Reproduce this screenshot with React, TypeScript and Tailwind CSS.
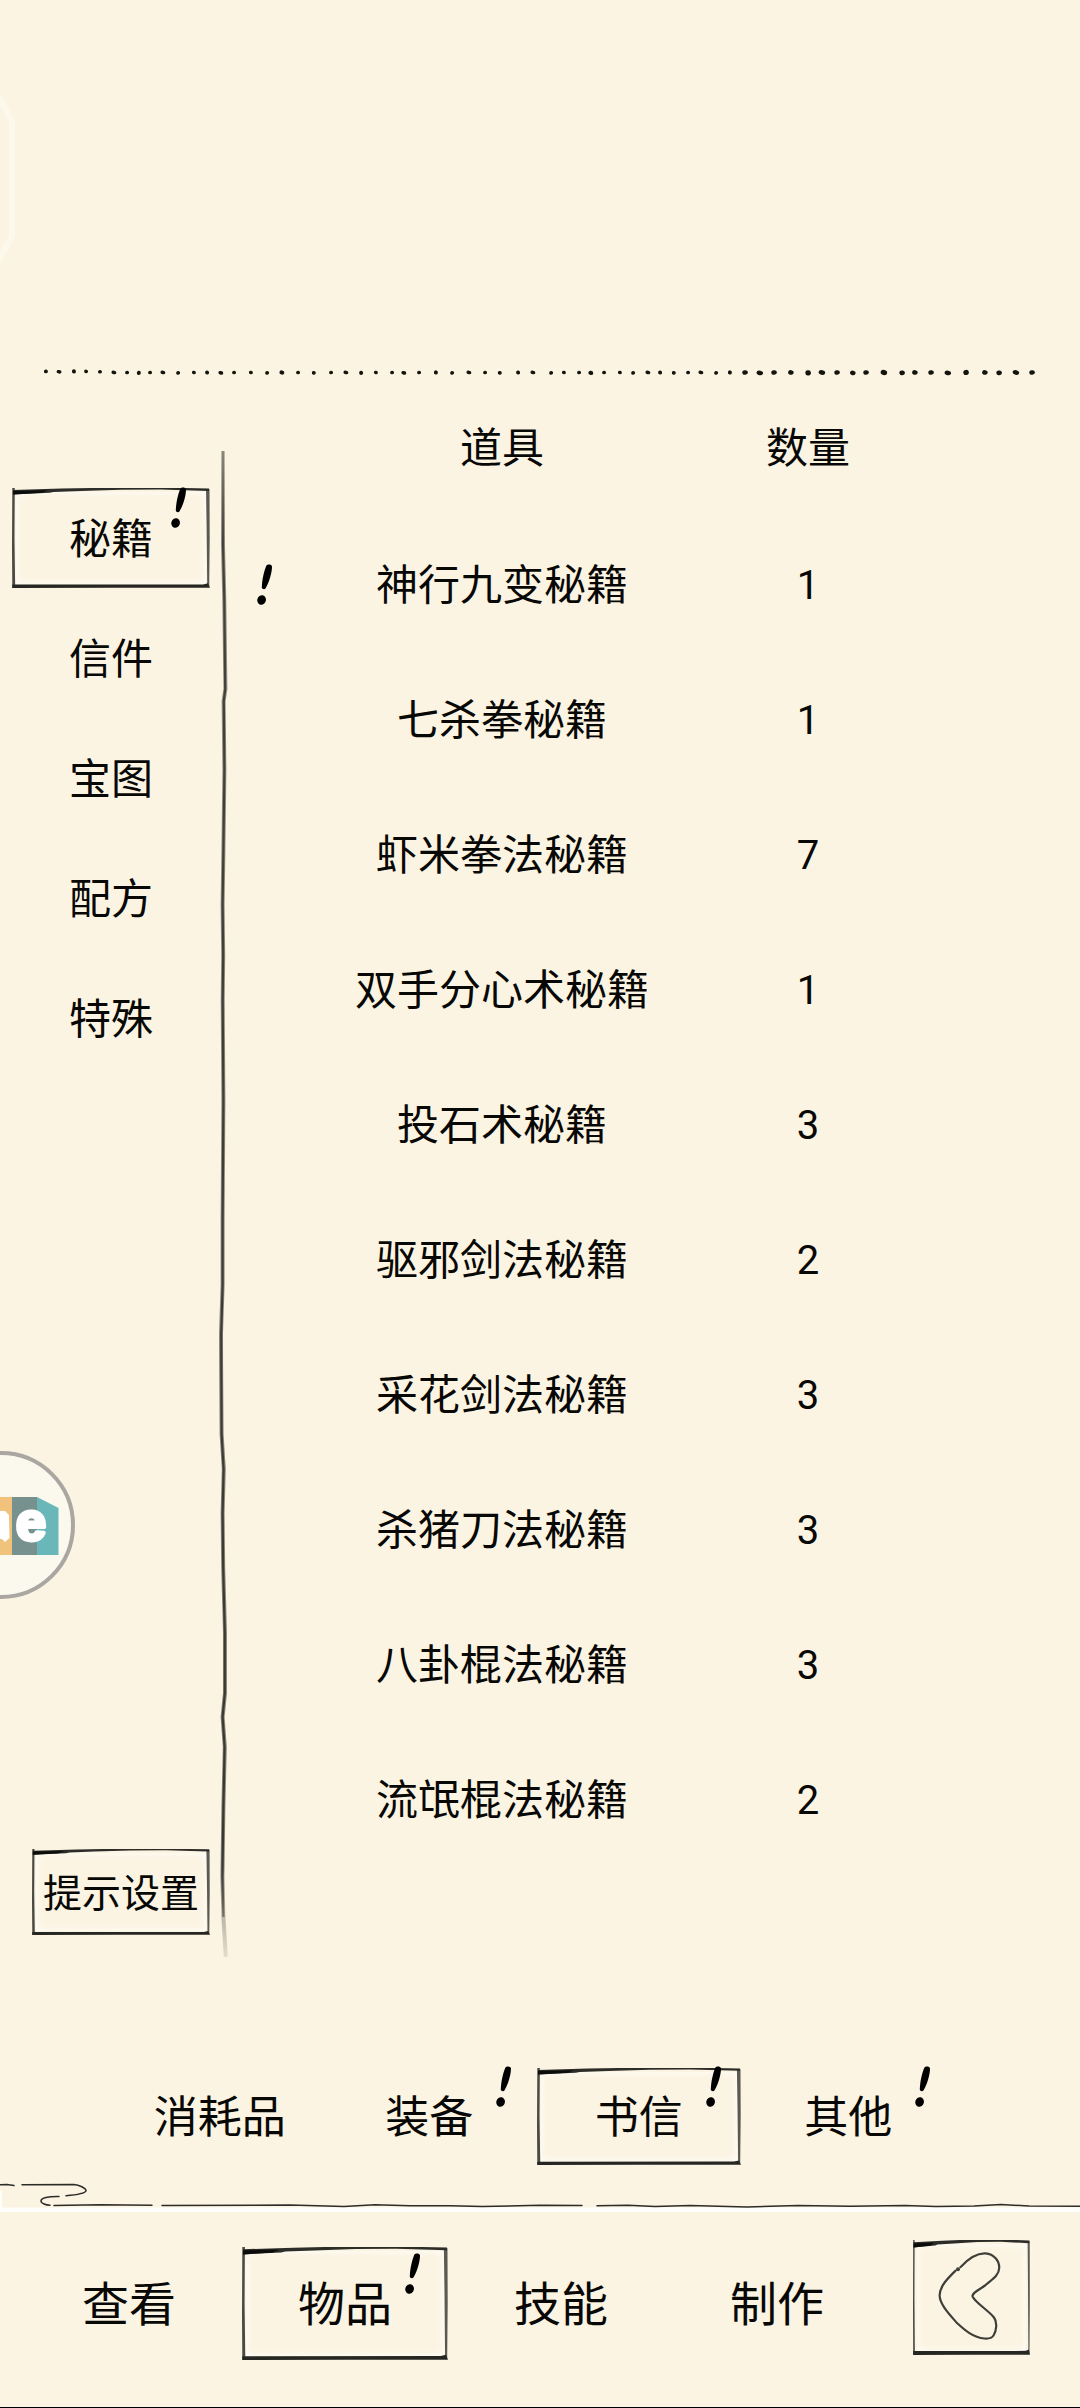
import React, { useState } from 'react';

interface TabItem {
  id: string;
  label: string;
  alert?: boolean;
}

interface BagItem {
  name: string;
  count: number;
  isNew?: boolean;
}

const categories: TabItem[] = [
  { id: 'manual', label: '秘籍', alert: true },
  { id: 'letter', label: '信件' },
  { id: 'map', label: '宝图' },
  { id: 'recipe', label: '配方' },
  { id: 'special', label: '特殊' },
];

const bagTabs: TabItem[] = [
  { id: 'consumable', label: '消耗品' },
  { id: 'equipment', label: '装备', alert: true },
  { id: 'books', label: '书信', alert: true },
  { id: 'other', label: '其他', alert: true },
];

const navTabs: TabItem[] = [
  { id: 'view', label: '查看' },
  { id: 'items', label: '物品', alert: true },
  { id: 'skills', label: '技能' },
  { id: 'craft', label: '制作' },
];

const items: BagItem[] = [
  { name: '神行九变秘籍', count: 1, isNew: true },
  { name: '七杀拳秘籍', count: 1 },
  { name: '虾米拳法秘籍', count: 7 },
  { name: '双手分心术秘籍', count: 1 },
  { name: '投石术秘籍', count: 3 },
  { name: '驱邪剑法秘籍', count: 2 },
  { name: '采花剑法秘籍', count: 3 },
  { name: '杀猪刀法秘籍', count: 3 },
  { name: '八卦棍法秘籍', count: 3 },
  { name: '流氓棍法秘籍', count: 2 },
];

const dots = [
  46, 59, 74, 86, 100, 114, 127, 139, 150, 163, 178, 194, 207, 221, 234, 251, 267, 282, 298, 314, 331, 346,
  361, 376, 392, 404, 419, 436, 452, 469, 485, 500, 518, 533, 551, 564, 579, 591, 604, 620, 633, 648, 660,
  674, 688, 701, 716, 730, 745, 760, 774, 791, 808, 822, 837, 853, 866, 884, 902, 915, 931, 948, 966, 985,
  999, 1016, 1032,
];

const DottedLine = () => (
  <svg viewBox="0 0 1080 20" className="block w-full" fill="#14140f" aria-hidden="true">
    {dots.map((x, i) => (
      <ellipse
        key={x}
        cx={x}
        cy={(i < 5 ? 11.4 : 12.5) + (i % 3 === 1 ? 0.4 : 0)}
        rx={(i > 47 ? 2.8 : 2) + (i % 4 === 1 ? 0.5 : 0)}
        ry={(i > 47 ? 2.3 : 1.8) + (i % 5 === 2 ? 0.3 : 0)}
        transform={`rotate(${i % 2 ? 12 : -8} ${x} 12)`}
      />
    ))}
  </svg>
);

const InkFrame = () => (
  <span className="pointer-events-none absolute inset-0" aria-hidden="true">
    <span className="absolute inset-1 shadow-[inset_0_0_8px_#ffffff]" />
    <svg viewBox="0 0 200 100" preserveAspectRatio="none" className="absolute inset-0 h-full w-full">
      <path d="M0.3 0 L2.8 0 L2.5 50 L3.2 100 L0.3 100 L0 60 Z" fill="#4a4a44" />
      <path d="M196 2 L199.5 1 L199.7 50 L199.2 99 L197.2 99 L196.6 40 Z" fill="#5a5a53" />
      <path d="M1 2 L50 0.6 L110 -0.6 L150 -0.4 L199 0.4 L199 2.9 L150 1.5 L110 1.8 L70 3 L42 4 L38 4.8 L1 6.6 Z" fill="#2c2c28" />
      <path d="M1 3 L36 2.2 L30 4.8 L1 6.6 Z" fill="#0c0c0a" />
      <path d="M0.3 96.6 L193 96.4 L198 95.3 L200 99.8 L100 99.8 L0.3 100 Z" fill="#262622" />
    </svg>
  </span>
);

const AlertMark: React.FC<{ className?: string }> = ({ className = '' }) => (
  <svg viewBox="0 0 15 41" className={`h-[41px] w-[15px] ${className}`} fill="#000000" aria-hidden="true">
    <path d="M9.4 1.6 C10.4 -0.2 14.6 0 15 2.4 C15 8 12.6 17 8.6 24.2 C7.6 25.8 5 25.2 4.8 23.4 C5 16 7 7 9.4 1.6 Z" />
    <ellipse cx="4.6" cy="36" rx="4.3" ry="4.8" transform="rotate(15 4.6 36)" />
  </svg>
);

const InkDivider = () => (
  <svg viewBox="0 0 12 1507" className="mt-[71px] block w-3 shrink-0 self-start" fill="none" aria-hidden="true">
    <defs>
      <linearGradient id="ink" gradientUnits="userSpaceOnUse" x1="0" y1="0" x2="0" y2="1507">
        <stop offset="0" stopColor="#2a2a25" stopOpacity="0.45" />
        <stop offset="0.06" stopColor="#2a2a25" stopOpacity="0.9" />
        <stop offset="0.94" stopColor="#2a2a25" stopOpacity="1" />
        <stop offset="1" stopColor="#2a2a25" stopOpacity="0.2" />
      </linearGradient>
    </defs>
    <g stroke="url(#ink)" strokeLinejoin="round">
      <path
        d="M5 0 L5 94 L6.3 149 L7.4 238 L5.6 250 L6.4 319 L5.4 399 L4.6 454 L5.2 504 L4.7 549 L5.4 649 L4.6 769 L4.6 834 L3 883 L3.1 913 L3.6 983 L5.8 1018 L4.6 1062 L5.2 1117 L7 1182 L7 1242 L4.6 1266 L6.8 1296 L5.4 1356 L4.4 1426 L5.4 1466 L7.8 1506"
        strokeOpacity="0.55"
        strokeWidth="4"
      />
      <path
        d="M5 0 L5 94 L6.3 149 L7.2 238 L5.8 250 L6.4 319 L5.4 399 L4.6 454 L5.2 504 L4.7 549 L5.4 649 L4.6 769 L4.6 834 L3.2 883 L3.3 913 L3.6 983 L5.6 1018 L4.6 1062 L5.2 1117 L6.8 1182 L6.8 1242 L4.6 1266 L6.6 1296 L5.4 1356 L4.4 1426 L5.4 1466"
        strokeOpacity="0.85"
        strokeWidth="2.2"
      />
    </g>
  </svg>
);

const WaveLine = () => (
  <svg viewBox="0 0 1080 32" className="mt-4 block w-full" fill="none" aria-hidden="true">
    <rect x="0" y="26.5" width="1080" height="4.5" fill="#fffefb" />
    <rect x="0" y="10" width="2" height="18" fill="#fffefb" />
    <g stroke="#2c2c28" strokeWidth="1.5" strokeLinecap="round">
      <path d="M0 3.8 L7 3.6 L14 4.6" />
      <path d="M22 3.8 L74 3.5 C79 3.8 86 7 86 9.8 C85 13 76 14 66 14.8" />
      <path d="M59 15.6 C48 15.4 41 17 41 20 C41 22.4 46 24 50 24.3" />
      <path d="M54 24.5 L100 23.8 L152 24.2" />
      <path d="M162 24.6 L290 24 L344 25.4 L375 23.8 L410 24.8 L450 24.8 L482 25.6 L540 24.2 L582 24.6" />
      <path d="M597 24.8 L628 24.2 L655 25.4 L690 24.6 L747 26 L798 24.4 L850 25.2 L905 24.4 L936 25.6 L974 25 L1001 23.6 L1029 25 L1080 25.2" />
    </g>
  </svg>
);

const BackArrow = () => (
  <svg viewBox="0 0 117 115" className="absolute inset-0 h-full w-full" fill="none" aria-hidden="true">
    <path
      d="M47.4 27.2 C55 19 64 13 72.5 13.4 C81 14 86.5 21 86.2 28 C86 36 78 40 72 45.5 C66 50 58 53 59.8 57 C63 63 76 71 81 77.5 C84.5 82 83.5 91 80.5 95.5 C78.5 98.6 75 98.8 71.5 98.5 C60 97.5 51 89.5 44 83 C37 75 27 65 26.6 55.5 C26.8 46 35 38 42.6 30.6"
      stroke="#3f3f39"
      strokeWidth="2.2"
      strokeLinecap="round"
    />
    <circle cx="45" cy="29.2" r="2" fill="#3f3f39" />
  </svg>
);

const FloatingLogo = () => (
  <svg viewBox="0 0 76 150" className="h-[150px] w-[76px]" aria-hidden="true">
    <circle cx="1" cy="75" r="72" fill="#fbf8ee" stroke="#aaa6a1" strokeWidth="4" />
    <rect x="0" y="47" width="12" height="58" fill="#f0c27b" />
    <rect x="12" y="47" width="25" height="58" fill="#77918e" />
    <path d="M37 47 L58.5 58 L58.5 105 L37 105 Z" fill="#6ab7b9" />
    <path d="M0 61 L5 61 L9 65 L9.5 88 L5 92 L2 89 L0 89 Z" fill="#ffffff" />
    <text
      x="31"
      y="90"
      textAnchor="middle"
      fill="#ffffff"
      stroke="#ffffff"
      strokeWidth="4"
      strokeLinejoin="round"
      className="font-['Liberation_Sans'] text-[54px] font-bold"
    >
      e
    </text>
  </svg>
);

interface TabButtonProps {
  tab: TabItem;
  active: boolean;
  onSelect: (id: string) => void;
  className: string;
  alertClass: string;
}

const TabButton: React.FC<TabButtonProps> = ({ tab, active, onSelect, className, alertClass }) => (
  <button
    type="button"
    aria-pressed={active}
    onClick={() => onSelect(tab.id)}
    className={`relative flex items-center justify-center pt-[3px] whitespace-nowrap ${className}`}
  >
    {active && <InkFrame />}
    <span className="relative">{tab.label}</span>
    {tab.alert && <AlertMark className={`absolute ${alertClass}`} />}
  </button>
);

const App: React.FC = () => {
  const [category, setCategory] = useState('manual');
  const [bagTab, setBagTab] = useState('books');
  const [nav, setNav] = useState('items');

  return (
    <div className="relative flex min-h-screen flex-col overflow-hidden border-b border-black bg-[#fcf4e2] pt-[360px] font-['Roboto','Noto_Sans_CJK_SC',sans-serif] text-[#080806]">
      {/* Overlays docked to the left screen edge */}
      <svg viewBox="0 0 20 170" className="absolute left-0 top-[94px] h-[170px] w-5" fill="none" aria-hidden="true">
        <path d="M-3 0 L12 27 L12 143 L-3 168" stroke="#fdf8ec" strokeWidth="6" />
      </svg>
      <div className="absolute left-0 top-[1450px]">
        <FloatingLogo />
      </div>

      <DottedLine />

      <main className="flex text-[42px] leading-[60px]">
        <aside className="flex w-[218px] shrink-0 flex-col gap-5 pt-[108px] pr-2 pb-[23px] pl-3">
          {categories.map((c) => (
            <TabButton
              key={c.id}
              tab={c}
              active={category === c.id}
              onSelect={setCategory}
              className="h-[100px]"
              alertClass="-top-px right-6"
            />
          ))}
          <button
            type="button"
            className="relative mt-auto flex h-[86px] w-[178px] items-center justify-center self-end pt-[3px] whitespace-nowrap text-[39px]"
          >
            <InkFrame />
            <span className="relative">提示设置</span>
          </button>
        </aside>

        <InkDivider />

        <table className="flex-1 table-fixed self-start text-center">
          <colgroup>
            <col className="w-[8%]" />
            <col className="w-[48%]" />
            <col className="w-[24%]" />
            <col className="w-[20%]" />
          </colgroup>
          <thead>
            <tr className="h-[137px]">
              <td />
              <th scope="col" className="font-normal">道具</th>
              <th scope="col" className="font-normal">数量</th>
              <td />
            </tr>
          </thead>
          <tbody>
            {items.map((item) => (
              <tr key={item.name} className="h-[135px]">
                <td>{item.isNew && <AlertMark className="mx-auto block" />}</td>
                <td className="pt-[3px] whitespace-nowrap">{item.name}</td>
                <td className="pt-[3px] text-[40px]">{item.count}</td>
                <td />
              </tr>
            ))}
          </tbody>
        </table>
      </main>

      <div className="mt-[110px] grid grid-cols-4 pr-[127px] pl-[115px] text-[44px]">
        {bagTabs.map((t) => (
          <TabButton
            key={t.id}
            tab={t}
            active={bagTab === t.id}
            onSelect={setBagTab}
            className="mx-auto h-[97px] w-[204px]"
            alertClass="-top-0.5 right-5"
          />
        ))}
      </div>

      <WaveLine />

      <nav className="flex items-start gap-7 pt-[27px] pr-[50px] pb-[47px] pl-[21px] text-[47px]">
        <div className="mt-[7px] grid flex-1 grid-cols-4">
          {navTabs.map((t) => (
            <TabButton
              key={t.id}
              tab={t}
              active={nav === t.id}
              onSelect={setNav}
              className="mx-auto h-[113px] w-[206px]"
              alertClass="top-1.5 right-7"
            />
          ))}
        </div>
        <button type="button" aria-label="返回" className="relative h-[115px] w-[117px] shrink-0">
          <InkFrame />
          <BackArrow />
        </button>
      </nav>
    </div>
  );
};

export default App;
